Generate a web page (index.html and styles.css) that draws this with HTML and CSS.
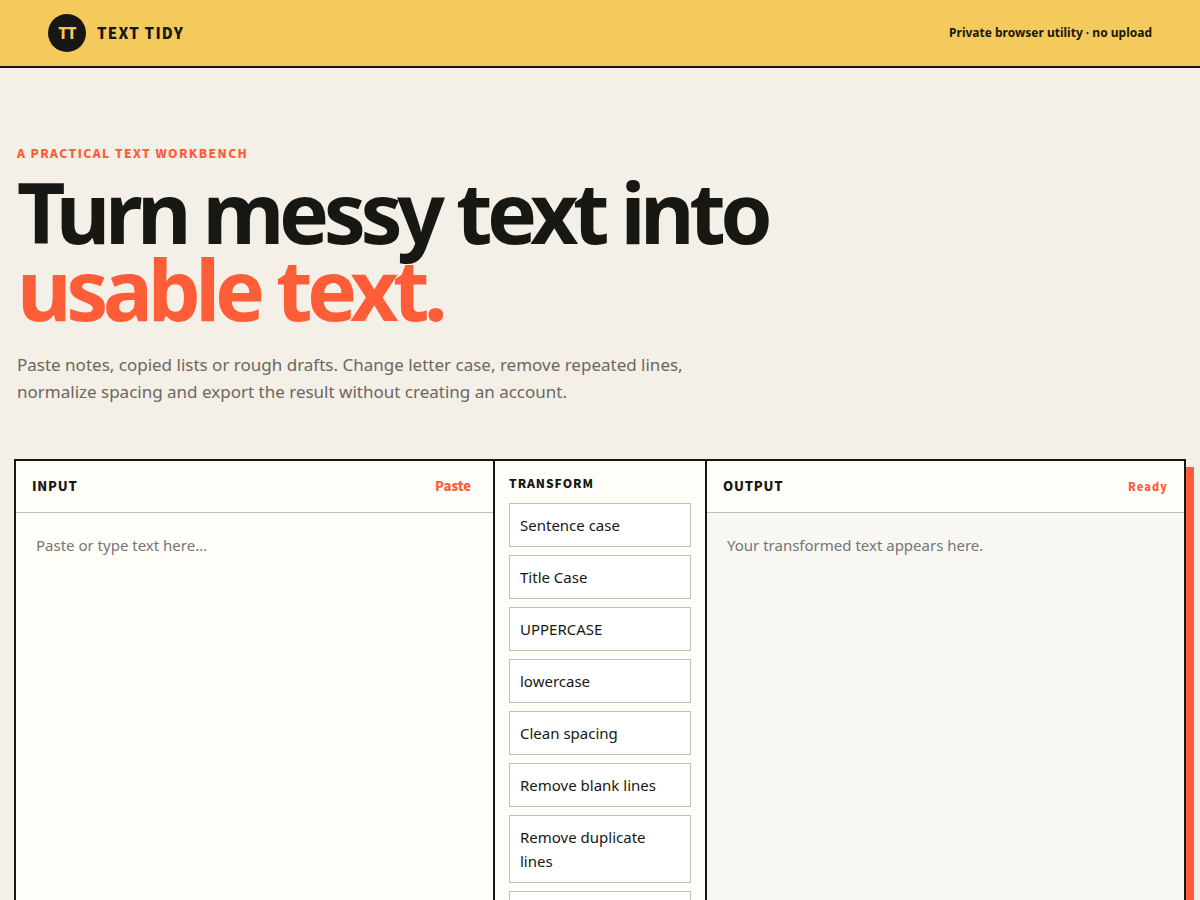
FILE: index.html
```html
<!DOCTYPE html>
<html lang="en">
<head>
    <meta charset="UTF-8">
    <title>Text Tidy</title>
    <meta name="viewport" content="width=device-width, initial-scale=1.0">
    <link rel="stylesheet" href="styles.css">
</head>
<body>
    <header class="top-bar">
        <a class="brand" href="#"><span class="brand-mark">TT</span>TEXT TIDY</a>
        <span class="top-note">Private browser utility · no upload</span>
    </header>

    <main>
        <section class="hero">
            <p class="eyebrow">A PRACTICAL TEXT WORKBENCH</p>
            <h1>Turn messy text into <span class="accent">usable text.</span></h1>
            <p class="intro">Paste notes, copied lists or rough drafts. Change letter case, remove repeated lines, normalize spacing and export the result without creating an account.</p>
        </section>

        <section class="workspace">
            <div class="panel">
                <div class="panel-head">
                    <label for="inputText">INPUT</label>
                    <button type="button" class="paste-button">Paste</button>
                </div>
                <textarea id="inputText" placeholder="Paste or type text here..."></textarea>
            </div>

            <div class="actions">
                <h2>TRANSFORM</h2>
                <button type="button">Sentence case</button>
                <button type="button">Title Case</button>
                <button type="button">UPPERCASE</button>
                <button type="button">lowercase</button>
                <button type="button">Clean spacing</button>
                <button type="button">Remove blank lines</button>
                <button type="button">Remove duplicate lines</button>
                <button type="button">Sort lines</button>
            </div>

            <div class="panel">
                <div class="panel-head">
                    <label for="outputText">OUTPUT</label>
                    <span class="status">Ready</span>
                </div>
                <textarea id="outputText" class="output" placeholder="Your transformed text appears here." readonly></textarea>
            </div>
        </section>
    </main>
</body>
</html>
```

FILE: styles.css
```css
* {
    box-sizing: border-box;
}
body {
    margin: 0;
    font-family: "Noto Sans", sans-serif;
    background-color: #f4efe7;
    color: #171713;
}
button,
textarea {
    font: inherit;
    color: inherit;
}
.top-bar {
    display: flex;
    justify-content: space-between;
    align-items: center;
    padding: 14px 48px;
    background-color: #f4ca5d;
    border-bottom: 2px solid #171713;
}
.brand {
    display: flex;
    align-items: center;
    gap: 11px;
    color: inherit;
    text-decoration: none;
    font-family: "Noto Sans CJK JP", sans-serif;
    font-size: 15px;
    line-height: 24px;
    font-weight: 900;
    letter-spacing: 0.08em;
}
.brand-mark {
    display: grid;
    place-items: center;
    width: 38px;
    height: 38px;
    border-radius: 50%;
    background-color: #171713;
    color: #f4ca5d;
    letter-spacing: -0.05em;
}
.top-note {
    font-size: 12px;
    line-height: 18px;
    font-weight: 700;
}
main {
    max-width: 1240px;
    margin: 0 auto;
    padding: 76px 14px 80px;
}
.hero {
    padding: 0 3px;
    margin-bottom: 54px;
}
.eyebrow {
    margin: 0 0 11px;
    font-family: "Noto Sans CJK JP", sans-serif;
    font-size: 12px;
    line-height: 18px;
    font-weight: 900;
    letter-spacing: 0.12em;
    color: #ff5c38;
}
h1 {
    max-width: 850px;
    margin: 0 0 24px;
    font-size: 84px;
    line-height: 77px;
    font-weight: 700;
    letter-spacing: -0.065em;
}
.accent {
    display: block;
    color: #ff5c38;
}
.intro {
    max-width: 700px;
    margin: 0;
    font-size: 17px;
    line-height: 27px;
    color: #6b675f;
}
/* The column dividers are the dark background showing through the gap */
.workspace {
    display: grid;
    grid-template-columns: 1fr 210px 1fr;
    gap: 2px;
    background-color: #171713;
    border: 2px solid #171713;
    box-shadow: 8px 8px 0 #ff5c38;
}
.panel {
    display: flex;
    flex-direction: column;
    min-width: 0;
    background-color: #fffef9;
}
.panel-head {
    display: flex;
    justify-content: space-between;
    align-items: center;
    min-height: 52px;
    padding: 0 16px 2px;
    border-bottom: 1px solid #c3c0b8;
    font-family: "Noto Sans CJK JP", sans-serif;
    font-size: 13px;
    line-height: 20px;
    font-weight: 900;
    letter-spacing: 0.06em;
}
.paste-button {
    padding: 6px;
    border: 0;
    background: none;
    color: #ff5c38;
    letter-spacing: 0;
    cursor: pointer;
}
.status {
    font-size: 11px;
    letter-spacing: 0.1em;
    color: #ff5c38;
}
textarea {
    flex: 1;
    width: 100%;
    min-height: 520px;
    padding: 20px;
    border: 0;
    outline: 0;
    resize: none;
    background-color: #fffef9;
    font-size: 15px;
    line-height: 24px;
}
.output {
    background-color: #f8f7f3;
}
.actions {
    display: flex;
    flex-direction: column;
    gap: 8px;
    padding: 14px;
    background-color: #fffef9;
}
.actions h2 {
    margin: 0 0 4px;
    font-family: "Noto Sans CJK JP", sans-serif;
    font-size: 12px;
    line-height: 16px;
    font-weight: 900;
    letter-spacing: 0.08em;
}
.actions button {
    padding: 9px 10px;
    border: 1px solid #c3c0b8;
    background-color: #fff;
    font-size: 15px;
    line-height: 24px;
    text-align: left;
    cursor: pointer;
}
.actions button:hover {
    background-color: #f4ca5d;
}

@media (max-width: 800px) {
    .top-bar {
        padding: 14px 20px;
    }
    h1 {
        font-size: 48px;
        line-height: 46px;
    }
    .workspace {
        grid-template-columns: 1fr;
    }
    textarea {
        min-height: 260px;
    }
}
```
